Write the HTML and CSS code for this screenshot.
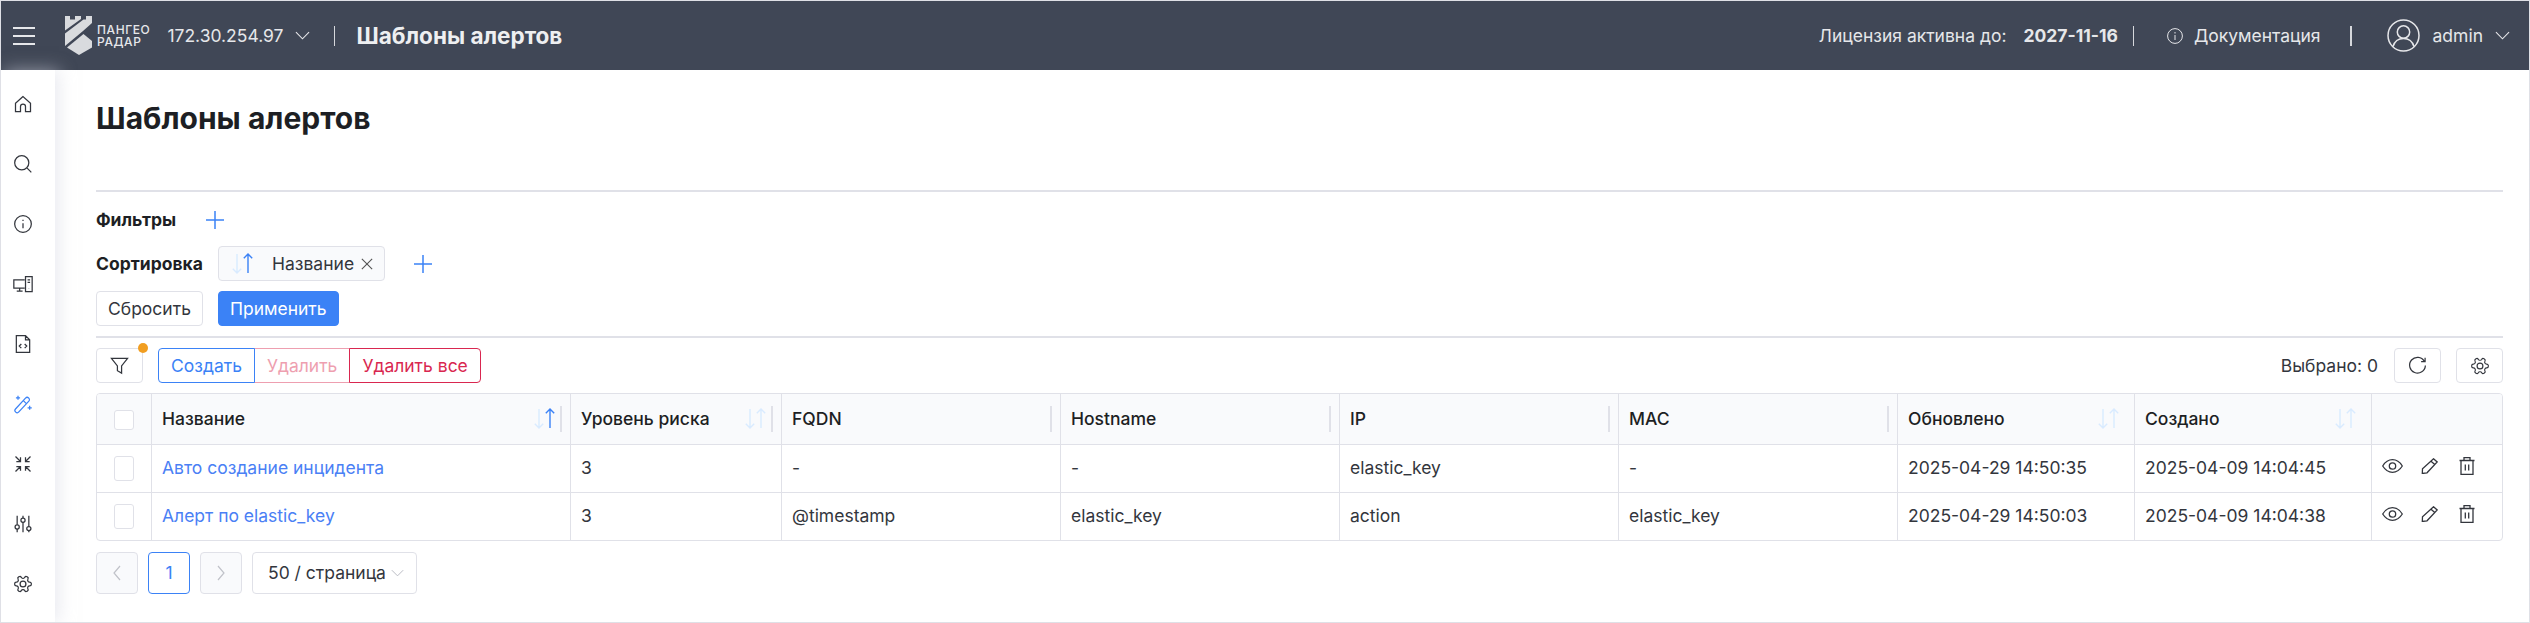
FILE: index.html
```html
<!DOCTYPE html>
<html lang="ru">
<head>
<meta charset="utf-8">
<title>Шаблоны алертов</title>
<link rel="stylesheet" href="styles.css">
</head>
<body>
<svg class="sprite" width="0" height="0" aria-hidden="true">
  <defs>
    <symbol id="i-sort" viewBox="0 0 21 21">
      <path class="down" d="M5 1v19M.8 15.800L5 20l4.200-4.200"/>
      <path class="up" d="M16 20V1M11.800 5.200L16 1l4.200 4.200"/>
    </symbol>
    <symbol id="i-plus" viewBox="0 0 18 18"><path d="M9 0v18M0 9h18"/></symbol>
    <symbol id="i-chev" viewBox="0 0 16 9"><path d="M1 1l7 7 7-7"/></symbol>
    <symbol id="i-eye" viewBox="0 0 21 14"><path d="M.7 7C3.500 2.500 6.500.7 10.500.7S17.500 2.500 20.300 7c-2.800 4.500-5.800 6.300-9.800 6.300S3.500 11.500.7 7z"/><circle cx="10.500" cy="7" r="3.200"/></symbol>
    <symbol id="i-pen" viewBox="0 0 17 16"><path d="M12.500.8l3.700 3.200L6 14.800l-4.700.7.200-4.700zM10 3.300l3.800 3.300"/></symbol>
    <symbol id="i-trash" viewBox="0 0 16 18"><path d="M.5 3.500h15M5 3.500v-3h6v3M2 3.500v14h12v-14M6.300 7.500v6M9.700 7.500v6"/></symbol>
    <symbol id="i-gear" viewBox="0 0 24 24"><g transform="rotate(90 12 12)"><path d="M12.220 2h-.44a2 2 0 0 0-2 2v.18a2 2 0 0 1-1 1.730l-.43.250a2 2 0 0 1-2 0l-.15-.08a2 2 0 0 0-2.730.730l-.22.380a2 2 0 0 0 .730 2.730l.15.100a2 2 0 0 1 1 1.720v.510a2 2 0 0 1-1 1.740l-.15.090a2 2 0 0 0-.730 2.730l.22.380a2 2 0 0 0 2.730.730l.15-.08a2 2 0 0 1 2 0l.43.250a2 2 0 0 1 1 1.730V20a2 2 0 0 0 2 2h.44a2 2 0 0 0 2-2v-.18a2 2 0 0 1 1-1.730l.43-.25a2 2 0 0 1 2 0l.15.080a2 2 0 0 0 2.730-.730l.22-.39a2 2 0 0 0-.73-2.730l-.15-.08a2 2 0 0 1-1-1.740v-.5a2 2 0 0 1 1-1.740l.15-.09a2 2 0 0 0 .73-2.730l-.22-.38a2 2 0 0 0-2.730-.73l-.15.080a2 2 0 0 1-2 0l-.43-.25a2 2 0 0 1-1-1.730V4a2 2 0 0 0-2-2z"/></g><circle cx="12" cy="12" r="3.500"/></symbol>
  </defs>
</svg>

<header class="topbar">
  <svg class="icon burger" viewBox="0 0 22 18"><path d="M0 1h22M0 9h22M0 17h22"/></svg>
  <div class="logo">
    <svg class="logo-mark" viewBox="0 0 27 39">
      <path d="M0 0h5v3.500h5V0h6v3L0 14.500z"/>
      <path d="M0 17.500L18.500 3.500H21V0h6v7L18 15l-18 15z"/>
      <path d="M2 31.500L18.500 18l8.500 7v6.500L14 39z"/>
    </svg>
    <div class="logo-text"><span>ПАНГЕО</span><span>РАДАР</span></div>
  </div>
  <span class="host">172.30.254.97</span>
  <svg class="chev host-chev"><use href="#i-chev"/></svg>
  <span class="bar-sep"></span>
  <strong class="bar-title">Шаблоны алертов</strong>
  <div class="bar-right">
    <span class="license">Лицензия активна до:</span>
    <strong class="license-date">2027-11-16</strong>
    <span class="bar-sep thin"></span>
    <svg class="icon doc-icon" viewBox="0 0 16 16"><circle cx="8" cy="8" r="7.400"/><path d="M8 7v5M8 4v1.500"/></svg>
    <span class="doc">Документация</span>
    <span class="bar-sep user-sep"></span>
    <svg class="icon avatar" viewBox="0 0 33 33"><circle cx="16.500" cy="16.500" r="15.500"/><circle cx="16.500" cy="13" r="6.200"/><path d="M6 27.500c1.500-5 5-8 10.500-8s9 3 10.500 8"/></svg>
    <span class="user">admin</span>
    <svg class="chev user-chev"><use href="#i-chev"/></svg>
  </div>
</header>

<div class="shell">
  <nav class="sidebar">
    <svg class="nav-icon" viewBox="0 0 24 24"><path d="M12 3L3 11v10h6v-6a3 3 0 0 1 6 0v6h6V11z"/></svg>
    <svg class="nav-icon" viewBox="0 0 24 24"><circle cx="10.500" cy="10.500" r="8.500"/><path d="M17 17l5 5"/></svg>
    <svg class="nav-icon" viewBox="0 0 24 24"><circle cx="12" cy="12" r="10"/><path d="M12 11v6M12 7v1.500"/></svg>
    <svg class="nav-icon" viewBox="0 0 24 24"><path d="M14 7H1v10h13M8 17v3M4.500 20.500h7M15 3h8v18h-8zM17.500 7h3M17.500 10h3M19 17v.5"/></svg>
    <svg class="nav-icon" viewBox="0 0 24 24"><path d="M4 2h11l5 5v15H4zM15 2v5h5M10 12l-2.500 2.500L10 17M14 12l2.500 2.500L14 17"/></svg>
    <svg class="nav-icon active" viewBox="0 0 24 24"><path d="M3 18L15 5a2.500 2.500 0 0 1 4 3.500L7 21.500a2.500 2.500 0 0 1-4-3.500zM12.500 8l3.500 3.500M6 2v5M3.500 4.500h5M20 14v5M17.500 16.500h5"/></svg>
    <svg class="nav-icon" viewBox="0 0 24 24"><path d="M3 3l6 6M9 4v5H4M21 3l-6 6M15 4v5h5M3 21l6-6M9 20v-5H4M21 21l-6-6M15 20v-5h5"/></svg>
    <svg class="nav-icon" viewBox="0 0 24 24"><path d="M5 2v11M5 18v4M12 2v3M12 10v12M19 2v13M19 20v2"/><circle cx="5" cy="15.500" r="2.500"/><circle cx="12" cy="7.500" r="2.500"/><circle cx="19" cy="17.500" r="2.500"/></svg>
    <svg class="nav-icon" viewBox="0 0 24 24"><use href="#i-gear"/></svg>
  </nav>

  <main class="content">
    <h1 class="page-title">Шаблоны алертов</h1>
    <hr class="rule rule-top">
    <div class="filter-row">
      <b class="label filters-label">Фильтры</b>
      <svg class="plus"><use href="#i-plus"/></svg>
    </div>
    <div class="sort-row">
      <b class="label sort-label">Сортировка</b>
      <span class="sort-tag">
        <svg class="sort sort-asc"><use href="#i-sort"/></svg>
        <span>Название</span>
        <svg class="tag-x" viewBox="0 0 14 14"><path d="M1 1l12 12M13 1L1 13"/></svg>
      </span>
      <svg class="plus"><use href="#i-plus"/></svg>
    </div>
    <div class="apply-row">
      <button class="btn">Сбросить</button>
      <button class="btn primary">Применить</button>
    </div>
    <hr class="rule rule-tight">
    <div class="toolbar">
      <button class="btn icon-btn filter-btn">
        <svg viewBox="0 0 20 20" class="btn-svg"><path d="M1.500 2.500h17l-6.300 8V18l-4.400-2.500v-5z"/></svg>
        <span class="dot"></span>
      </button>
      <div class="btn-group">
        <button class="btn create">Создать</button>
        <button class="btn del-off">Удалить</button>
        <button class="btn del">Удалить все</button>
      </div>
      <span class="selected">Выбрано: 0</span>
      <button class="btn icon-btn">
        <svg viewBox="0 0 20 20" class="btn-svg"><path d="M17.200 5.500A8.300 8.300 0 1 0 18.300 10M18 1.800v4.200h-4.200"/></svg>
      </button>
      <button class="btn icon-btn">
        <svg viewBox="0 0 24 24" class="btn-svg gear"><use href="#i-gear"/></svg>
      </button>
    </div>

    <div class="table-wrap">
      <table class="grid">
        <colgroup>
          <col class="c-check"><col class="c-name"><col class="c-risk"><col class="c-wide"><col class="c-wide"><col class="c-wide"><col class="c-wide"><col class="c-date"><col class="c-date"><col>
        </colgroup>
        <thead>
          <tr>
            <th class="check"><span class="box"></span></th>
            <th><div class="th"><span>Название</span><svg class="sort sort-asc"><use href="#i-sort"/></svg><i class="grip"></i></div></th>
            <th><div class="th"><span>Уровень риска</span><svg class="sort"><use href="#i-sort"/></svg><i class="grip"></i></div></th>
            <th><div class="th"><span>FQDN</span><i class="grip"></i></div></th>
            <th><div class="th"><span>Hostname</span><i class="grip"></i></div></th>
            <th><div class="th"><span>IP</span><i class="grip"></i></div></th>
            <th><div class="th"><span>MAC</span><i class="grip"></i></div></th>
            <th><div class="th"><span>Обновлено</span><svg class="sort end"><use href="#i-sort"/></svg></div></th>
            <th><div class="th"><span>Создано</span><svg class="sort end"><use href="#i-sort"/></svg></div></th>
            <th></th>
          </tr>
        </thead>
        <tbody>
          <tr>
            <td class="check"><span class="box"></span></td>
            <td><a class="link">Авто создание инцидента</a></td>
            <td>3</td><td>-</td><td>-</td><td>elastic_key</td><td>-</td>
            <td>2025-04-29 14:50:35</td><td>2025-04-09 14:04:45</td>
            <td><div class="actions"><svg class="a-eye"><use href="#i-eye"/></svg><svg class="a-pen"><use href="#i-pen"/></svg><svg class="a-trash"><use href="#i-trash"/></svg></div></td>
          </tr>
          <tr>
            <td class="check"><span class="box"></span></td>
            <td><a class="link">Алерт по elastic_key</a></td>
            <td>3</td><td>@timestamp</td><td>elastic_key</td><td>action</td><td>elastic_key</td>
            <td>2025-04-29 14:50:03</td><td>2025-04-09 14:04:38</td>
            <td><div class="actions"><svg class="a-eye"><use href="#i-eye"/></svg><svg class="a-pen"><use href="#i-pen"/></svg><svg class="a-trash"><use href="#i-trash"/></svg></div></td>
          </tr>
        </tbody>
      </table>
    </div>

    <div class="pager">
      <button class="btn page off"><svg class="pg" viewBox="0 0 10 16"><path d="M8 1L2 8l6 7"/></svg></button>
      <button class="btn page current">1</button>
      <button class="btn page off"><svg class="pg" viewBox="0 0 10 16"><path d="M2 1l6 7-6 7"/></svg></button>
      <button class="btn per-page">50 / страница<svg class="chev"><use href="#i-chev"/></svg></button>
    </div>
  </main>
</div>
</body>
</html>
```

FILE: styles.css
```css
* { box-sizing: border-box; }
html, body { height: 100%; }
body {
  margin: 0;
  height: 623px;
  overflow: hidden;
  background: #fff;
  color: #33363d;
  font: 17.5px/24px Inter, "Noto Sans", sans-serif;
  border: 1px solid #dfe0e6;
  display: flex;
  flex-direction: column;
}
.sprite { position: absolute; }
svg { fill: none; stroke: currentColor; flex: none; display: block; }

/* top bar */
.topbar {
  height: 69px;
  flex: none;
  background: #404756;
  color: #e6e7ea;
  display: flex;
  align-items: center;
  padding: 0 19px 0 12px;
}
.burger { width: 22px; height: 18px; stroke-width: 1.800; margin-right: 30px; }
.logo { display: flex; align-items: center; gap: 5px; margin-right: 17px; }
.logo-mark { width: 27px; height: 39px; stroke: none; fill: #d9dbde; }
.logo-text { display: flex; flex-direction: column; font-size: 12px; line-height: 12px; letter-spacing: .6px; font-weight: 500; }
.chev { width: 15px; height: 9px; stroke-width: 1.200; }
.host-chev { margin-left: 12px; margin-right: 24px; }
.bar-sep { width: 1px; height: 20px; background: #d6d8dc; }
.bar-title { font-size: 22.500px; font-weight: 700; margin-left: 21px; color: #eeeff1; }
.bar-right { margin-left: auto; display: flex; align-items: center; }
.license-date { font-weight: 700; margin-left: 17px; margin-right: 15px; }
.bar-sep.thin { margin-right: 33px; }
.doc-icon { width: 16px; height: 16px; stroke-width: 1; margin-right: 11px; }
.user-sep { width: 2px; margin-left: 29px; margin-right: 35px; }
.avatar { width: 33px; height: 33px; stroke-width: 1.500; margin-right: 13px; }
.user-chev { margin-left: 12px; }

/* shell */
.shell { flex: 1; display: flex; min-height: 0; }
.sidebar {
  width: 54px;
  flex: none;
  padding: 24px 0 0 12px;
  display: flex;
  flex-direction: column;
  gap: 40px;
  box-shadow: 4px 0 16px rgba(215, 217, 228, .55);
  position: relative;
}
.nav-icon { width: 20px; height: 20px; stroke-width: 1.500; color: #33363d; }
.nav-icon.active { color: #3b82f6; }

.content { flex: 1; min-width: 0; padding: 27px 26px 0 41px; }
.page-title { margin: 0; font-size: 30px; line-height: 42px; font-weight: 700; color: #1d1f24; }
.rule { height: 2px; border: 0; margin: 0; background: #e0e1e8; }
.rule-top { margin-top: 51px; }
.filter-row, .sort-row { display: flex; align-items: center; height: 35px; }
.filter-row { margin-top: 10px; }
.sort-row { margin-top: 9px; }
.label { font-weight: 700; color: #1d1f24; }
.filters-label { width: 110px; }
.sort-label { width: 122px; }
.plus { width: 18px; height: 18px; stroke-width: 1.500; color: #3b82f6; }
.sort-tag {
  height: 35px;
  width: 167px;
  display: flex;
  align-items: center;
  background: #f9fafc;
  border: 1px solid #e0e1e8;
  border-radius: 4px;
  padding: 0 11px 0 13px;
}
.sort-tag .sort { margin-right: 19px; margin-left: 0; }
.sort-tag + .plus { margin-left: 29px; }
.tag-x { width: 12px; height: 12px; stroke-width: 1.300; margin-left: auto; color: #555; }

.sort { width: 21px; height: 21px; stroke-width: 1.400; color: #d9ebff; margin-left: auto; }
.down { stroke: currentColor; }
.up { stroke: var(--up, currentColor); }
.sort-asc { --up: #3b82f6; }

.btn {
  font: inherit;
  color: #33363d;
  background: #fff;
  border: 1px solid #e0e1e8;
  border-radius: 4px;
  height: 35px;
  padding: 0 12px;
}
.primary { background: #3b82f6; border-color: #3b82f6; color: #fff; }
.apply-row { display: flex; gap: 15px; margin-top: 10px; }
.apply-row .btn { padding: 0 11px; }

.rule-tight { margin-top: 10px; }
.toolbar { display: flex; align-items: center; margin-top: 10px; height: 35px; }
.icon-btn { width: 47px; padding: 0; display: flex; align-items: center; justify-content: center; position: relative; }
.btn-svg { width: 19px; height: 19px; stroke-width: 1.300; }
.gear { width: 20px; height: 20px; stroke-width: 1.400; }
.dot { position: absolute; right: -6px; top: -6px; width: 10px; height: 10px; border-radius: 50%; background: #f19e21; }
.filter-btn { margin-right: 15px; }
.btn-group { display: flex; }
.btn-group .btn { border-radius: 0; margin-left: -1px; }
.btn-group .create { color: #3b82f6; border-color: #3b82f6; border-radius: 4px 0 0 4px; margin-left: 0; z-index: 1; }
.btn-group .del-off { color: #ee9fb0; border-color: #ee9fb0; }
.btn-group .del { color: #d92750; border-color: #d92750; border-radius: 0 4px 4px 0; }
.selected { margin-left: auto; margin-right: 16px; }
.selected + .btn { margin-right: 15px; }

/* table */
.table-wrap { margin-top: 10px; border: 1px solid #e0e1e8; border-radius: 4px; overflow: hidden; }
.grid { width: 100%; border-collapse: collapse; table-layout: fixed; }
.c-check { width: 54px; }
.c-name { width: 419px; }
.c-risk { width: 211px; }
.c-wide { width: 279px; }
.c-date { width: 237px; }
th, td { border-left: 1px solid #e0e1e8; border-top: 1px solid #e0e1e8; padding: 0 0 0 10.500px; text-align: left; }
th:first-child, td:first-child { border-left: 0; }
thead th { border-top: 0; background: #f9fafc; height: 50px; font-weight: 500; color: #1d1f24; }
tbody td { height: 48px; }
td.check, th.check { padding: 0; text-align: center; }
.box { display: inline-block; vertical-align: middle; width: 20px; height: 20px; border: 1px solid #e0e1e8; border-radius: 3px; background: #fff; }
tbody .box { height: 25px; }
.th { display: flex; align-items: center; padding-right: 8px; }
.grip { width: 2px; height: 26px; background: #e0e1e8; margin-left: auto; flex: none; }
.sort + .grip { margin-left: 5px; }
.sort.end { margin-right: 7px; }
.link { color: #4a80f5; }
.actions { display: flex; align-items: center; margin-top: -5px; }
.actions svg { stroke-width: 1.300; }
.a-eye { width: 21px; height: 14px; }
.a-pen { width: 17px; height: 16px; margin-left: 18px; }
.a-trash { width: 16px; height: 18px; margin-left: 21px; }

/* pagination */
.pager { display: flex; gap: 10px; margin-top: 11px; }
.page { width: 42px; height: 42px; padding: 0; display: flex; align-items: center; justify-content: center; }
.off { background: #f9fafc; }
.pg { width: 10px; height: 16px; stroke-width: 1.200; color: #c0c2c9; }
.current { border-color: #3b82f6; color: #3b82f6; }
.per-page { height: 42px; padding: 0 12px 0 15px; display: flex; align-items: center; gap: 5px; width: 165px; }
.per-page .chev { width: 13px; height: 8px; color: #b8bac2; }
```
